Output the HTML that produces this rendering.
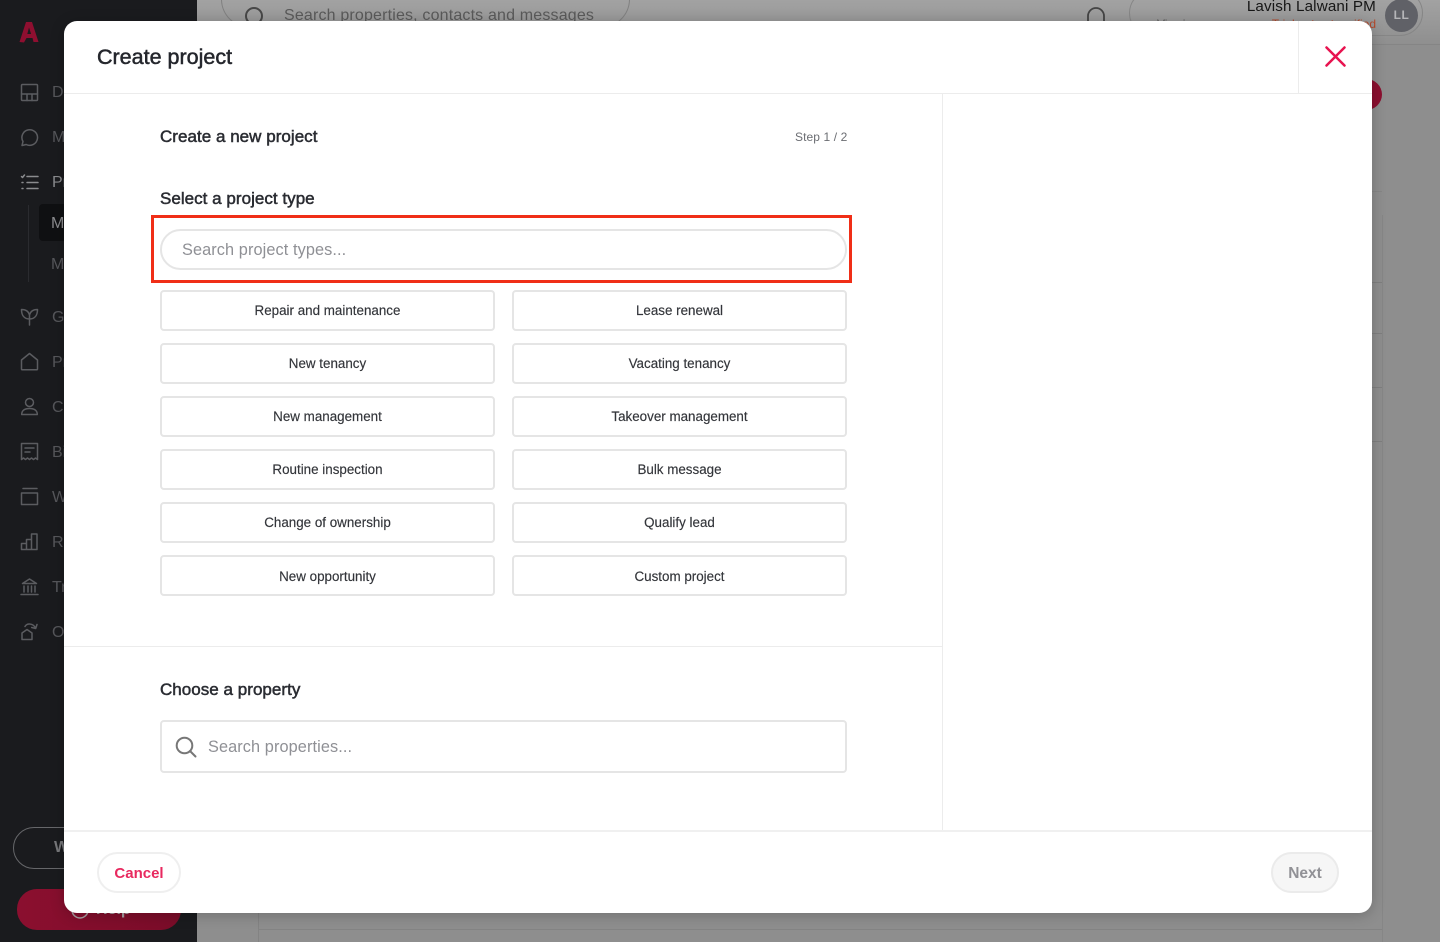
<!DOCTYPE html>
<html lang="en">
<head>
<meta charset="utf-8">
<title>Create project</title>
<style>
html,body{margin:0;padding:0;width:1440px;height:942px;overflow:hidden;background:#8e8e8e;font-family:"Liberation Sans",sans-serif;color:#23252b}
*{box-sizing:border-box}
.a{position:absolute;white-space:nowrap}
#side{position:absolute;left:0;top:0;width:197px;height:942px;background:#1a1b1e}
#side svg.i{position:absolute;left:20px;width:19px;height:19px;fill:none;stroke:#5b5c60;stroke-width:1.5;stroke-linecap:round;stroke-linejoin:round}
.nav{position:absolute;left:52px;font-size:16px;line-height:20px;color:#56575b;white-space:nowrap}
#modal{position:absolute;left:64px;top:21px;width:1308px;height:892px;background:#fff;border-radius:13px;box-shadow:0 2px 14px rgba(0,0,0,.22)}
.line{position:absolute;background:#ececec}
.btn{position:absolute;width:335px;height:41px;border:2px solid #e5e5e5;border-radius:4px;background:#fff;text-align:center;font-size:13.4px;line-height:38px;color:#33353a;white-space:nowrap;-webkit-text-stroke:.15px #33353a}
.h{position:absolute;white-space:nowrap;font-size:17px;line-height:20px;font-weight:400;letter-spacing:.03px;color:#2a2c32;-webkit-text-stroke:.5px #2a2c32}
</style>
</head>
<body>
<div id="side">
<svg class="a" style="left:18px;top:21px" width="22" height="23" viewBox="0 0 22 23"><path d="M8 1h6l6.500 20H15.500l-1-4H8.500l-2.500 4.500-4.500-.5z M11 6.500 9.300 13h3.800z" fill="#8e0f30" fill-rule="evenodd"/></svg>
<svg class="i" style="top:83px" viewBox="0 0 19 19"><rect x="1.500" y="1.500" width="16" height="16" rx="1"/><path d="M1.500 11h16M7 11v6.500M12 11v6.500"/></svg>
<svg class="i" style="top:128px" viewBox="0 0 19 19"><path d="M2 17.500l1-4a7.800 7.800 0 1 1 3.200 3z"/></svg>
<svg class="i" style="top:173px;stroke:#8a8b8e" viewBox="0 0 19 19"><path d="M7 3.500h11M7 9.500h11M7 15.500h11M1.500 3.500l1 1 2-2.500M2 9.500h1M2 15.500h1"/></svg>
<div class="nav" style="top:83px">Dashboard</div>
<div class="nav" style="top:128px">Messages</div>
<div class="nav" style="top:173px;color:#8a8b8e">Projects</div>
<div class="a" style="left:27.500px;top:205px;width:1px;height:77px;background:#2a2b2f"></div>
<div class="a" style="left:39px;top:204px;width:40px;height:37px;background:#0f1012;border-radius:4px"></div>
<div class="nav" style="top:214px;left:51px;color:#8a8b8e">My</div>
<div class="nav" style="top:255px;left:51px">Maintenance</div>
<svg class="i" style="top:307px" viewBox="0 0 19 19"><path d="M9.500 18V8M9.500 12C4 12 1.500 8 1.500 2.500c4 0 7 1.500 8 5.500 1-4 4-5.500 8-5.500C17.500 8 15 12 9.500 12"/></svg>
<svg class="i" style="top:352px" viewBox="0 0 19 19"><path d="M1.500 8 9.500 1.500 17.500 8v9a.8.8 0 0 1-.8.8H2.300a.8.8 0 0 1-.8-.8z"/></svg>
<svg class="i" style="top:397px" viewBox="0 0 19 19"><circle cx="9.500" cy="5.500" r="4"/><path d="M1.700 17.500c0-4 3-6 7.800-6s7.800 2 7.800 6z"/></svg>
<svg class="i" style="top:442px" viewBox="0 0 19 19"><path d="M1.500 17.500v-16h16v16l-2-1.500-2 1.500-2-1.500-2 1.500-2-1.500-2 1.500-2-1.500zM5 6h9M5 10h5"/></svg>
<svg class="i" style="top:487px" viewBox="0 0 19 19"><path d="M3 1.500h14M1.500 6h16v11.500h-16z"/></svg>
<svg class="i" style="top:532px" viewBox="0 0 19 19"><path d="M1.500 11.500h5v6h-5zM6.500 7.500h5v10h-5zM11.500 2h5.500v15.500h-5.500z"/></svg>
<svg class="i" style="top:577px" viewBox="0 0 19 19"><path d="M1 17.500h17M2.500 6.500 9.500 2l7 4.500zM4 9v6M8 9v6M11.500 9v6M15 9v6"/></svg>
<svg class="i" style="top:622px" viewBox="0 0 19 19"><path d="M2 11l5-3.500 5 3.500v6.500H2zM5 4.500C7 1 13 1 15.500 6M17 2.500l-1.300 4-4-1"/></svg>
<div class="nav" style="top:308px">Growth</div>
<div class="nav" style="top:353px">Properties</div>
<div class="nav" style="top:398px">Contacts</div>
<div class="nav" style="top:443px">Bills</div>
<div class="nav" style="top:488px">Work</div>
<div class="nav" style="top:533px">Reports</div>
<div class="nav" style="top:578px">Trust</div>
<div class="nav" style="top:623px">Owners</div>
<div class="a" style="left:13px;top:827px;width:170px;height:42px;border:1.500px solid #66676a;border-radius:21px"></div>
<div class="nav" style="left:54px;top:838px;color:#77787b;font-weight:700">W</div>
<div class="a" style="left:17px;top:889px;width:164px;height:41px;background:linear-gradient(90deg,#8b0f2f,#7a0d29);border-radius:20px"></div>
<svg class="a" style="left:70px;top:900px" width="20" height="20" viewBox="0 0 20 20"><circle cx="10" cy="10" r="8" fill="none" stroke="#a8a0a2" stroke-width="1.500"/></svg>
<div class="a" style="left:96px;top:900px;font-size:16px;line-height:20px;font-weight:700;color:#a8a0a2">Help</div>
</div>

<!-- dimmed application behind the dialog -->
<div class="a" style="left:197px;top:0;width:1243px;height:45px;background:linear-gradient(#a2a2a2,#8f8f8f);border-bottom:1px solid #858585"></div>
<div class="a" style="left:221px;top:-30px;width:409px;height:58px;border:1px solid #808080;border-radius:29px"></div>
<svg class="a" style="left:243px;top:5px" width="24" height="24" viewBox="0 0 24 24"><circle cx="11" cy="11" r="8" fill="none" stroke="#474747" stroke-width="2"/></svg>
<div class="a" style="left:284px;top:6px;font-size:16px;line-height:20px;color:#5a5a5a;letter-spacing:.17px">Search properties, contacts and messages</div>
<svg class="a" style="left:1085px;top:4px" width="22" height="20" viewBox="0 0 22 20"><path d="M3 20v-8a8 8 0 0 1 16 0v8" fill="none" stroke="#444" stroke-width="1.800"/></svg>
<div class="a" style="left:1129px;top:-10px;width:294px;height:46px;border:1px solid #868686;border-radius:23px"></div>
<div class="a" style="right:64px;top:-2px;font-size:15.200px;line-height:18px;color:#161616;letter-spacing:.15px">Lavish Lalwani PM</div>
<div class="a" style="right:64px;top:16px;font-size:12px;line-height:16px;color:#b5482a">Trial not yet verified</div>
<div class="a" style="left:1157px;top:16px;font-size:12px;line-height:16px;color:#555">Viewing</div>
<div class="a" style="left:1385px;top:-1px;width:33px;height:33px;border-radius:50%;background:#606167;color:#b5b5b8;font-size:12px;font-weight:700;line-height:32px;text-align:center;letter-spacing:.5px">LL</div>
<div class="a" style="left:1350px;top:79px;width:32px;height:31px;border-radius:50%;background:#8b0f2f"></div>
<div class="a" style="left:1381.500px;top:215px;width:1px;height:727px;background:#868686"></div>
<div class="a" style="left:1372px;top:191px;width:10px;height:1px;background:#868686"></div>
<div class="a" style="left:1372px;top:282px;width:10px;height:1px;background:#7f7f7f"></div>
<div class="a" style="left:1372px;top:333px;width:10px;height:1px;background:#7f7f7f"></div>
<div class="a" style="left:1372px;top:387px;width:10px;height:1px;background:#7f7f7f"></div>
<div class="a" style="left:1372px;top:441px;width:10px;height:1px;background:#7f7f7f"></div>
<div class="a" style="left:258px;top:913px;width:1px;height:29px;background:#838383"></div>
<div class="a" style="left:258px;top:929px;width:1124px;height:1px;background:#838383"></div>

<div id="modal"></div>
<div class="line" style="left:64px;top:93px;width:1308px;height:1px"></div>
<div class="line" style="left:1298px;top:21px;width:1px;height:73px"></div>
<div class="line" style="left:942px;top:94px;width:1px;height:737px"></div>
<div class="line" style="left:64px;top:646px;width:879px;height:1px"></div>
<div class="line" style="left:64px;top:830px;width:1308px;height:2px;background:#f0f0f0"></div>

<div class="a" style="left:97px;top:44px;font-size:21.500px;line-height:26px;color:#24262c;-webkit-text-stroke:.5px #24262c">Create project</div>
<svg class="a" style="left:1325px;top:46px" width="21" height="21" viewBox="0 0 21 21"><path d="M1.500 1.500l18 18M19.500 1.500l-18 18" stroke="#e8134f" stroke-width="2.500" fill="none" stroke-linecap="round"/></svg>

<div class="h" style="left:160px;top:127px">Create a new project</div>
<div class="a" style="left:795px;top:129px;font-size:12px;line-height:16px;color:#6b6d72;letter-spacing:.1px">Step 1 / 2</div>
<div class="h" style="left:160px;top:189px">Select a project type</div>

<div class="a" style="left:151px;top:215px;width:701px;height:68px;border:3px solid #f02e17"></div>
<div class="a" style="left:160px;top:229px;width:687px;height:41px;border:2px solid #e5e5e5;border-radius:20.500px"></div>
<div class="a" style="left:182px;top:240px;font-size:16.300px;line-height:21px;color:#8f9095;letter-spacing:.1px">Search project types...</div>

<div class="btn" style="left:160px;top:290px">Repair and maintenance</div>
<div class="btn" style="left:512px;top:290px">Lease renewal</div>
<div class="btn" style="left:160px;top:343px">New tenancy</div>
<div class="btn" style="left:512px;top:343px">Vacating tenancy</div>
<div class="btn" style="left:160px;top:396px">New management</div>
<div class="btn" style="left:512px;top:396px">Takeover management</div>
<div class="btn" style="left:160px;top:449px">Routine inspection</div>
<div class="btn" style="left:512px;top:449px">Bulk message</div>
<div class="btn" style="left:160px;top:502px">Change of ownership</div>
<div class="btn" style="left:512px;top:502px">Qualify lead</div>
<div class="btn" style="left:160px;top:555px;padding-top:1px">New opportunity</div>
<div class="btn" style="left:512px;top:555px;padding-top:1px">Custom project</div>

<div class="h" style="left:160px;top:680px">Choose a property</div>
<div class="a" style="left:160px;top:720px;width:687px;height:53px;border:2px solid #e5e5e5;border-radius:4px"></div>
<svg class="a" style="left:175px;top:736px" width="22" height="22" viewBox="0 0 22 22"><circle cx="9.500" cy="9.500" r="7.800" fill="none" stroke="#777" stroke-width="2"/><path d="M15 15l5.500 5.500" stroke="#777" stroke-width="2" stroke-linecap="round"/></svg>
<div class="a" style="left:208px;top:737px;font-size:16.300px;line-height:21px;color:#8f9095;letter-spacing:.1px">Search properties...</div>

<div class="a" style="left:97px;top:852px;width:84px;height:41px;border:2px solid #efefef;border-radius:20.500px;background:#fff;text-align:center;font-size:15px;font-weight:700;line-height:39px;color:#e8295f">Cancel</div>
<div class="a" style="left:1271px;top:852px;width:68px;height:41px;border:2px solid #ebebeb;border-radius:20.500px;background:#f6f6f6;text-align:center;font-size:15.500px;font-weight:700;line-height:39px;color:#919196">Next</div>
</body>
</html>
